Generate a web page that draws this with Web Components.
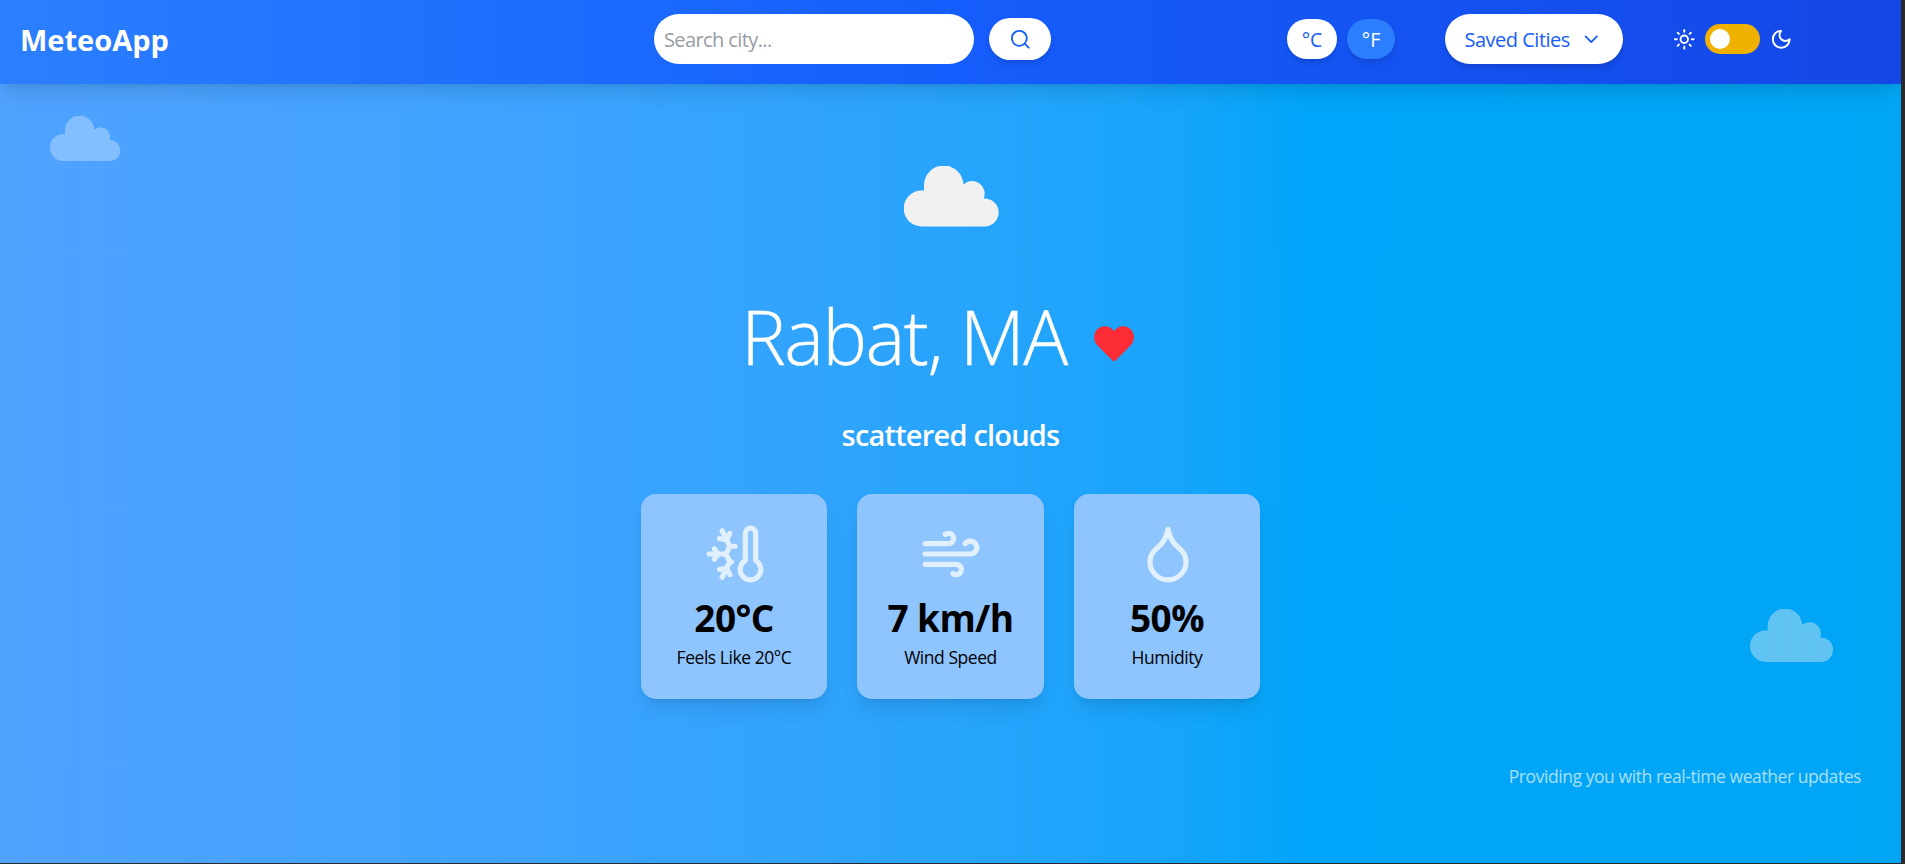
<!DOCTYPE html>
<html lang="en">
<head>
<meta charset="utf-8">
<title>MeteoApp</title>
<style>
html, body { margin: 0; height: 100%; background: #2a2a2c; overflow: hidden; }
body { font-family: "Open Sans", "Noto Sans", sans-serif; }
</style>
</head>
<body>
<meteo-app></meteo-app>
<script>
const define = (name, html) => customElements.define(name, class extends HTMLElement {
  constructor() {
    super();
    const root = this.attachShadow({ mode: 'open' });
    root.innerHTML = typeof html === 'function' ? html(this) : html;
  }
});

const stroked = (body, width = 2, box = '0 0 24 24') =>
  `<svg viewBox="${box}" fill="none" stroke="currentColor" stroke-width="${width}" stroke-linecap="round" stroke-linejoin="round">${body}</svg>`;

const ICONS = {
  search: stroked('<circle cx="11" cy="11" r="8"/><path d="m21 21-4.3-4.3"/>'),
  chevron: stroked('<path d="m6 9 6 6 6-6"/>'),
  sun: stroked('<circle cx="12" cy="12" r="4"/><path d="M12 2v2M12 20v2m-7.07-17.07 1.41 1.41m11.32 11.32 1.41 1.41M2 12h2M20 12h2M6.34 17.66l-1.41 1.41M19.07 4.93l-1.41 1.41"/>'),
  moon: stroked('<path d="M12 3a6 6 0 0 0 9 9 9 9 0 1 1-9-9Z"/>'),
  thermo: stroked('<path d="m10 20-1.25-2.5L6 18"/><path d="M10 4 8.75 6.5 6 6"/><path d="M10.585 15H10"/><path d="M2 12h6.5L10 9"/><path d="M20 14.54a4 4 0 1 1-4 0V4a2 2 0 0 1 4 0z"/><path d="m4 10 1.5 2L4 14"/><path d="m7 21 3-6-1.5-3"/><path d="m7 3 3 6h2"/>'),
  wind: stroked('<path d="M12.8 19.6A2 2 0 1 0 14 16H2"/><path d="M17.5 8a2.5 2.5 0 1 1 2 4H2"/><path d="M9.8 4.4A2 2 0 1 1 11 8H2"/>'),
  drop: stroked('<path d="M12 22a7 7 0 0 0 7-7c0-2-1-3.9-3-5.5S12.5 5 12 2.5C11.5 5 10 7.9 8 9.5S5 13 5 15a7 7 0 0 0 7 7z"/>'),
  heart: '<svg viewBox="0 0 40 35" fill="currentColor"><path d="M18.5 34.5 3.5 19.6C-1 15-1 7.5 3.3 3.3 8-1.2 15.5-.9 20 4.9 24.5-.9 32-1.2 36.7 3.3 41 7.5 41 15 36.5 19.6L21.5 34.5Q20 35.5 18.5 34.5Z"/></svg>',
  cloud: '<svg viewBox="0 0 286 181" fill="currentColor"><path d="M53 181a53 53 0 0 1 0-108h7V60a59 59 0 0 1 118-5 38 38 0 0 1 61 42 42 42 0 0 1 5 84z"/></svg>'
};

define('meteo-icon', el => `<style>
:host { display: block; flex: none; }
svg { display: block; width: 100%; height: 100%; }
</style>${ICONS[el.getAttribute('name')]}`);

define('meteo-pill', `<style>
:host { display: flex; align-items: center; box-sizing: border-box; flex: none; white-space: nowrap; border-radius: 999px;
  color: #155dfc; background: #fff; box-shadow: 0 5px 7.5px -1.25px #0000001a, 0 2.5px 5px -2.5px #0000001a; }
</style><slot></slot>`);

define('theme-switch', `<style>
:host { display: flex; align-items: center; gap: 9.5px; color: #fff; }
meteo-icon { width: 22.5px; height: 22.5px; }
.track { display: flex; box-sizing: border-box; width: 55px; height: 30px; padding: 5px; border-radius: 15px; background: #f0b100; }
.knob { width: 20px; height: 20px; border-radius: 50%; background: #fff; }
</style><meteo-icon name="sun"></meteo-icon><div class="track"><div class="knob"></div></div><meteo-icon name="moon"></meteo-icon>`);

define('meteo-header', `<style>
:host { display: grid; grid-template-columns: 654px 633px 158px 228px 1fr; align-items: center; box-sizing: border-box; height: 84px; padding-bottom: 6px;
  background: linear-gradient(to right in oklab, #2b7fff, #155dfc 50%, #1447e6);
  box-shadow: 0 12.5px 18.75px -3.75px #0000001a, 0 5px 7.5px -5px #0000001a; position: relative; }
.brand { padding-left: 20px; color: #fff; font-weight: 700; font-size: 29px; }
.search { display: flex; align-items: center; gap: 15px; }
.field { display: flex; align-items: center; box-sizing: border-box; width: 320px; height: 50px; padding-left: 10px; border-radius: 25px; background: #fff; color: #979ca5; font-size: 20px; letter-spacing: -.6px; }
.go { width: 62px; height: 42px; justify-content: center; }
.go meteo-icon { width: 22.5px; height: 22.5px; }
.units { display: flex; gap: 10px; }
.units meteo-pill { height: 40px; justify-content: center; font-size: 19.5px; }
.c { width: 50px; }
.f { width: 48px; background: #2b7fff; color: #fff; font-weight: 500; }
.saved { width: 178px; height: 50px; padding-left: 19.5px; font-size: 20px; letter-spacing: -.5px; gap: 10px; }
.saved meteo-icon { width: 22.5px; height: 22.5px; }
</style>
<div class="brand">MeteoApp</div>
<div class="search"><div class="field">Search city...</div><meteo-pill class="go"><meteo-icon name="search"></meteo-icon></meteo-pill></div>
<div class="units"><meteo-pill class="c">°C</meteo-pill><meteo-pill class="f">°F</meteo-pill></div>
<div><meteo-pill class="saved"><span>Saved Cities</span><meteo-icon name="chevron"></meteo-icon></meteo-pill></div>
<theme-switch></theme-switch>`);

define('weather-card', el => `<style>
:host { display: flex; flex-direction: column; align-items: center; box-sizing: border-box; width: 186.5px; height: 205px; padding-top: 29px; border-radius: 15px;
  background: #8ec5ff; color: #000; box-shadow: 0 12.5px 18.75px -3.75px #0000001a, 0 5px 7.5px -5px #0000001a; }
meteo-icon { width: 62px; height: 62px; margin-left: 1px; color: #e1f0ff; }
.value { font-size: 37px; font-weight: 700; line-height: 50px; margin-top: 8px; letter-spacing: -.6px; white-space: nowrap; }
.label { font-size: 17.5px; line-height: 28px; letter-spacing: -.45px; white-space: nowrap; }
</style><meteo-icon name="${el.getAttribute('icon')}"></meteo-icon><div class="value"><slot name="value"></slot></div><div class="label"><slot></slot></div>`);

define('weather-view', `<style>
:host { display: flex; flex-direction: column; align-items: center; position: relative; height: 779px; }
.main { width: 95.5px; height: 60.5px; margin: 82px 0 0 2px; color: #f1f1f2; }
.city { display: flex; align-items: center; height: 100px; margin-top: 59.5px; color: #fff; font-size: 75px; font-weight: 300; line-height: 100px; letter-spacing: -1.5px; white-space: nowrap; -webkit-text-stroke: .4px #fff; }
.city meteo-icon { width: 40px; height: 35px; margin: 15px 26px 0 27px; color: #fb2c36; }
.desc { margin-top: 27px; height: 44px; line-height: 44px; font-size: 29px; font-weight: 650; color: #fff; letter-spacing: -.8px; }
.cards { display: flex; gap: 30px; margin-top: 37px; }
.left, .right { position: absolute; color: #fff; }
.left { left: 50px; top: 32px; width: 71px; height: 45px; opacity: .3; }
.right { left: 1750px; top: 525px; width: 84px; height: 53px; color: #f1f1f2; opacity: .4; }
.foot { align-self: flex-end; margin: 62px 40px 0 0; color: #fff; opacity: .65; font-size: 17.5px; line-height: 30px; white-space: nowrap; letter-spacing: -.43px; }
</style>
<meteo-icon class="left" name="cloud"></meteo-icon>
<meteo-icon class="right" name="cloud"></meteo-icon>
<meteo-icon class="main" name="cloud"></meteo-icon>
<div class="city"><span>Rabat, MA</span><meteo-icon name="heart"></meteo-icon></div>
<div class="desc">scattered clouds</div>
<div class="cards">
<weather-card icon="thermo"><span slot="value">20°C</span>Feels Like 20°C</weather-card>
<weather-card icon="wind"><span slot="value">7 km/h</span>Wind Speed</weather-card>
<weather-card icon="drop"><span slot="value">50%</span>Humidity</weather-card>
</div>
<div class="foot">Providing you with real-time weather updates</div>`);

define('meteo-app', `<style>
:host { display: block; width: 1901px; height: 863px; overflow: hidden;
  background: linear-gradient(to right in oklab, oklch(70.7% .165 254.624), oklch(68.5% .169 237.323)); }
meteo-header { z-index: 1; }
</style><meteo-header></meteo-header><weather-view></weather-view>`);
</script>
</body>
</html>
